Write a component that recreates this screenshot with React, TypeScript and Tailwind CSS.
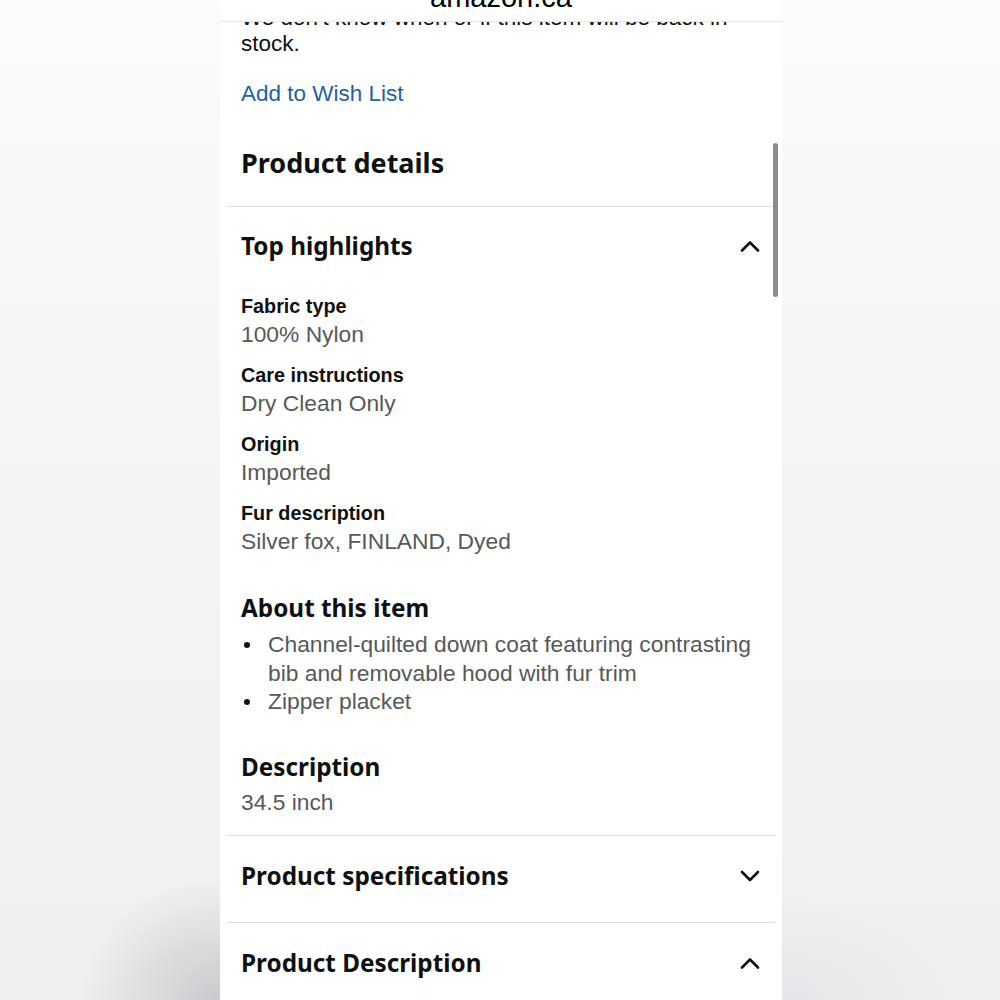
import React from 'react'

const highlights = [
  { label: 'Fabric type', value: '100% Nylon' },
  { label: 'Care instructions', value: 'Dry Clean Only' },
  { label: 'Origin', value: 'Imported' },
  { label: 'Fur description', value: 'Silver fox, FINLAND, Dyed' },
]

const bullets = [
  'Channel-quilted down coat featuring contrasting bib and removable hood with fur trim',
  'Zipper placket',
]

const body = { fontFamily: '"Liberation Sans", Arial, sans-serif' }
const ember = { fontFamily: '"Noto Sans", "Open Sans", sans-serif' }

function Chevron({ up }: { up?: boolean }) {
  return (
    <svg width="20" height="12" viewBox="0 0 20 12" className="shrink-0">
      <polyline
        points={up ? '2,10.5 10,2.5 18,10.5' : '2,2 10,10 18,2'}
        fill="none"
        stroke="#0f1111"
        strokeWidth="2.6"
        strokeLinecap="round"
        strokeLinejoin="round"
      />
    </svg>
  )
}

function AccordionRow({ title, up }: { title: string; up?: boolean }) {
  return (
    <div className="flex items-center justify-between pl-[14px] pr-[15px]">
      <h3 className="text-[24.3px] leading-[32px] font-bold text-[#0f1111]" style={ember}>
        {title}
      </h3>
      <Chevron up={up} />
    </div>
  )
}

export default function App() {
  return (
    <div className="min-h-screen w-full bg-[radial-gradient(ellipse_14%_12%_at_22%_100%,#cacace_0%,transparent_100%),radial-gradient(ellipse_16%_10%_at_79%_100%,#e6e6ea_0%,transparent_100%),linear-gradient(to_bottom,#fbfbfc,#f4f4f6_50%,#efeff2)]">
      <div className="relative ml-[220px] w-[562px] h-[1000px] overflow-hidden bg-white">
        <div className="absolute top-0 left-0 right-0 z-10 h-[22px] overflow-hidden bg-white border-b border-[#e6e6e6] flex justify-center">
          <span className="mt-[-17px] text-[29px] leading-none text-black" style={body}>amazon.ca</span>
        </div>

        {/* scrollbar */}
        <div className="absolute left-[553px] top-[143px] z-10 h-[154px] w-[5px] rounded-full bg-[#8c8c8c]" />

        <div className="px-[7px] pt-[5px]">
          <div className="px-[14px]" style={body}>
            <p className="text-[22.5px] leading-[26px] text-[#0f1111]">
              We don't know when or if this item will be back in stock.
            </p>
            <a className="mt-[23px] block text-[22.5px] leading-[28px] text-[#2162a1]">Add to Wish List</a>
          </div>

          <div className="mt-[39px] border-b border-[#dcdcdc] px-[14px] pb-[27px]">
            <h2 className="text-[27px] leading-[32px] font-bold text-[#0f1111]" style={ember}>
              Product details
            </h2>
          </div>

          <div className="pt-[23px]">
            <AccordionRow title="Top highlights" up />

            <div className="mt-[31px] flex flex-col gap-[14px] px-[14px]" style={body}>
              {highlights.map((h) => (
                <div key={h.label}>
                  <div className="text-[19.8px] leading-[27px] font-bold text-[#0f1111]">{h.label}</div>
                  <div className="text-[22.8px] leading-[28px] text-[#565959]">{h.value}</div>
                </div>
              ))}
            </div>

            <div className="mt-[37px] px-[14px]">
              <h3 className="text-[24.3px] leading-[32px] font-bold text-[#0f1111]" style={ember}>
                About this item
              </h3>
              <ul className="mt-[6px]" style={body}>
                {bullets.map((b) => (
                  <li key={b} className="flex">
                    <span className="w-[27px] shrink-0">
                      <span className="mt-[12px] ml-[3px] block h-[6px] w-[6px] rounded-full bg-[#0f1111]" />
                    </span>
                    <span className="text-[22.8px] leading-[28.5px] text-[#565959]">{b}</span>
                  </li>
                ))}
              </ul>
            </div>

            <div className="mt-[35px] border-b border-[#dcdcdc] px-[14px] pb-[19px]">
              <h3 className="text-[24.3px] leading-[32px] font-bold text-[#0f1111]" style={ember}>
                Description
              </h3>
              <p className="mt-[5px] text-[22.8px] leading-[28px] text-[#565959]" style={body}>
                34.5 inch
              </p>
            </div>
          </div>

          <div className="border-b border-[#dcdcdc] pt-[24px] pb-[30px]">
            <AccordionRow title="Product specifications" />
          </div>

          <div className="pt-[24px] pb-[30px]">
            <AccordionRow title="Product Description" up />
          </div>
        </div>
      </div>
    </div>
  )
}
